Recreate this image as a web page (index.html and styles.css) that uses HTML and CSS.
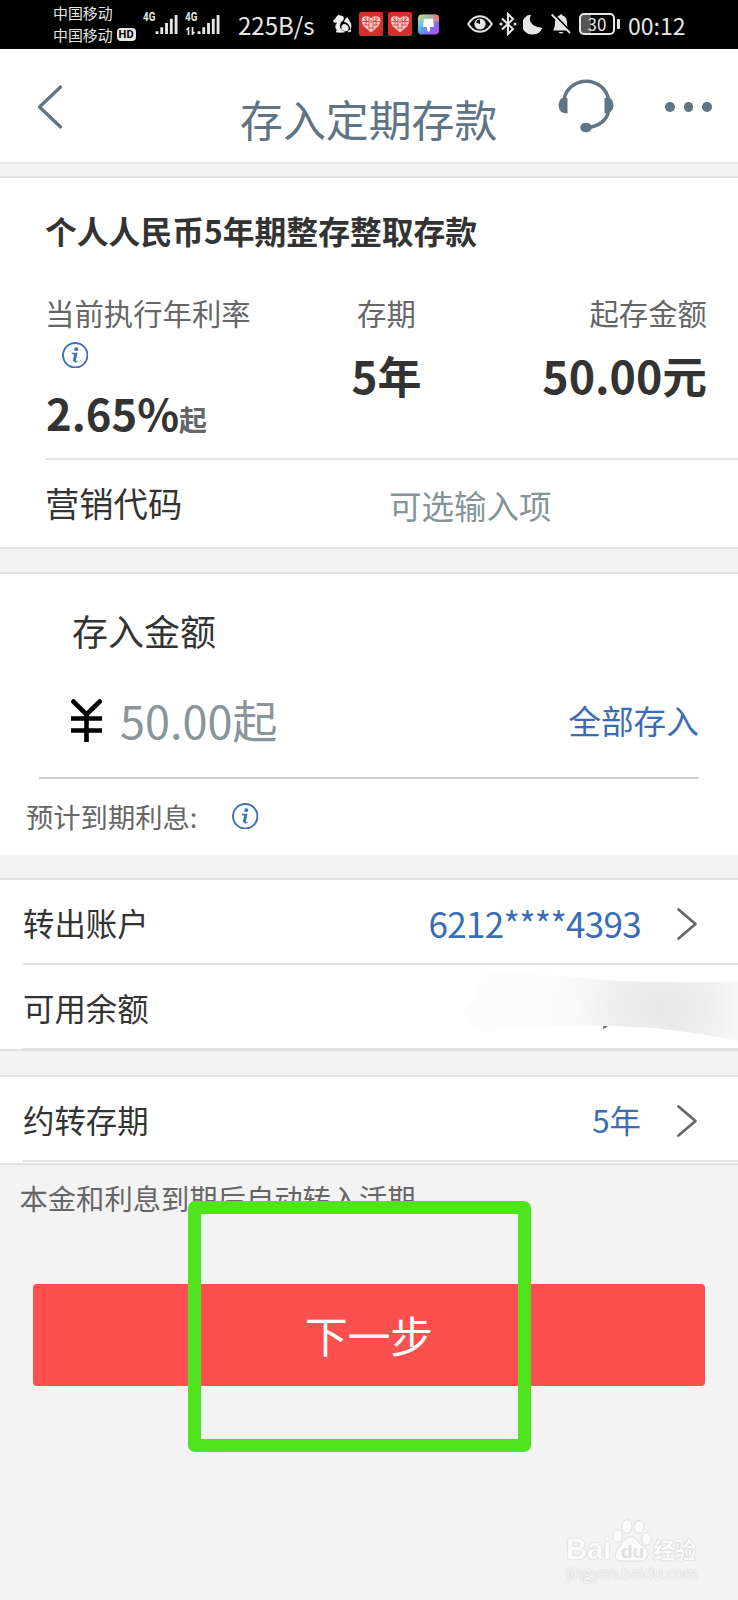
FILE: index.html
```html
<!DOCTYPE html>
<html lang="zh-CN">
<head>
<meta charset="utf-8">
<title>存入定期存款</title>
<link rel="stylesheet" href="styles.css">
</head>
<body>
<svg width="0" height="0" class="defs">
  <defs>
    <symbol id="info" viewBox="0 0 26 26">
      <circle cx="13" cy="13" r="12" fill="none" stroke="#3f72b5" stroke-width="1.9"/>
      <circle cx="14" cy="7" r="1.9" fill="#3f72b5"/>
      <path d="M9.600 11.300h4.600l-1.600 7.400q-.1 1.300 2.600.3" fill="none" stroke="#3f72b5" stroke-width="1.500"/>
      <path d="M13.400 11.300l-1.500 7.600" stroke="#3f72b5" stroke-width="2.600"/>
    </symbol>
    <symbol id="chevron" viewBox="0 0 22 34">
      <path d="M2.500 2.500L19.500 17L2.500 31.500" fill="none" stroke="#666" stroke-width="2.700" stroke-linecap="round" stroke-linejoin="round"/>
    </symbol>
    <symbol id="heart" viewBox="0 0 24 24">
      <rect width="24" height="24" rx="2" fill="#d5302c"/>
      <path d="M12 20.500L4.500 14Q1 8 4 5Q8 2.500 12 6Q16 2.500 20 5Q23 8 19.500 14Z" fill="#f6cdc8"/>
      <path d="M3 9.500h7M14 9.500h7M5 13h5M14 13h5M7 4v9M17 4v9M10 5.500v12M14 5.500v12M10 16h4M12 8v3M5 6l4 4M19 6l-4 4" stroke="#d5302c" stroke-width=".8"/>
    </symbol>
    <symbol id="bars" viewBox="0 0 24 22">
      <path d="M1.500 18v3M6.500 14v7M11.500 9.500v11.500M16.500 5v16M21.500 1v20" stroke="#e6e6e6" stroke-width="3"/>
    </symbol>
  </defs>
</svg>

<div class="screen">
  <div class="status">
    <div class="carriers">
      <span>中国移动</span>
      <span class="carrier-hd">中国移动<b class="hd">HD</b></span>
    </div>
    <div class="signal"><i>4G</i><svg class="bars"><use href="#bars"/></svg></div>
    <div class="signal second"><i>4G</i><svg class="bars"><use href="#bars"/></svg>
      <svg class="traffic" viewBox="0 0 9 8"><path d="M2.500 8V1L.5 3M6.500 0v7l2-2" fill="none" stroke="#e6e6e6" stroke-width="1.700"/></svg>
    </div>
    <span class="speed">225B/s</span>
    <svg class="squirrel" viewBox="0 0 20 20">
      <path d="M4.500 1.500L6 0L7.500 1Q11.500 1 11.500 4.500Q11 7 8.500 8Q7 11 7.500 14Q9 17.500 13 18.500Q10 19.500 5 19Q2 19 4 16.500Q.5 12.500 4.500 8.500Q0 9.500 0 6.500Q1 5 2.500 4.500Q2.500 2.500 4.500 1.500Z" fill="#eee"/>
      <path d="M11.500 8Q12.500 4 15 2.500Q17 5.500 19 9.500Q20 14 18 16Q18 9 11.500 8Z" fill="#eee"/>
      <path d="M9 16Q8 10 12.500 10Q16.500 11 16.500 15Q16 18.500 12.500 17.500Z" fill="#eee"/>
      <path d="M16 17l3-1.500v2.500l-3 1z" fill="#eee"/>
    </svg>
    <svg class="app"><use href="#heart"/></svg>
    <svg class="app app-two"><use href="#heart"/></svg>
    <svg class="paint" viewBox="0 0 22 21">
      <defs>
        <linearGradient id="rainbow" x1="0" y1="0" x2="1" y2="1">
          <stop offset="0" stop-color="#f3d65b"/><stop offset=".35" stop-color="#5ec2e3"/>
          <stop offset=".65" stop-color="#7d6cf0"/><stop offset="1" stop-color="#c34af0"/>
        </linearGradient>
        <linearGradient id="warm" x1="0" y1="0" x2="1" y2="0"><stop offset=".2" stop-color="#f7c555" stop-opacity="0"/><stop offset="1" stop-color="#f5766e"/></linearGradient>
      </defs>
      <rect width="22" height="21" rx="4" fill="url(#rainbow)"/>
      <path d="M0 9V4Q0 0 4 0H18Q22 0 22 4V7Z" fill="url(#warm)"/>
      <path d="M6 4.500h10v4H6zM5.500 8.500h11v4.500h-4v4q-1.500 2-3 0v-4h-4z" fill="#fff"/>
    </svg>
    <svg class="eye" viewBox="0 0 26 18">
      <path d="M1.200 9Q6 1.200 13 1.200T24.800 9Q20 16.800 13 16.800T1.200 9Z" fill="none" stroke="#e6e6e6" stroke-width="2"/>
      <circle cx="13" cy="9" r="5.600" fill="#e6e6e6"/><path d="M13 9V4.500q-3 0-4 3z" fill="#000"/>
    </svg>
    <svg class="bt" viewBox="0 0 18 24">
      <path d="M3 6.500L14 17L9 22V2L14 7L3 17.500" fill="none" stroke="#e6e6e6" stroke-width="2"/>
      <circle cx="2" cy="12" r="1.500" fill="#e6e6e6"/><circle cx="16" cy="12" r="1.500" fill="#e6e6e6"/>
    </svg>
    <svg class="moon" viewBox="0 0 20 21"><path d="M8 .500Q3 12 19.500 14Q16.500 20.500 10 20.500A10 10 0 0 1 8 .500Z" fill="#e6e6e6"/></svg>
    <svg class="bell" viewBox="0 0 20 22">
      <path d="M2 17.500Q4 15 4 9Q4.500 3.500 8.500 2.500Q10 0 11.500 2.500Q15.500 3.500 16 9Q16 15 18 17.500Z" fill="#e6e6e6"/>
      <path d="M7.500 19h5q-2.500 3-5 0z" fill="#e6e6e6"/>
      <path d="M2 0.500L20.500 19.500" stroke="#000" stroke-width="2"/><path d="M.7 1.500L19 20" stroke="#e6e6e6" stroke-width="1.800"/>
    </svg>
    <div class="battery"><span>30</span></div>
    <span class="clock">00:12</span>
  </div>

  <header class="nav">
    <svg class="back" viewBox="0 0 26 44"><path d="M23.500 2L2.500 22L23.500 42" fill="none" stroke="#5f7484" stroke-width="3.200" stroke-linecap="round" stroke-linejoin="round"/></svg>
    <h1>存入定期存款</h1>
    <svg class="headset" viewBox="0 0 56 56">
      <path d="M6 22.500A22.500 21.500 0 0 1 50.500 22.500M50.500 35Q47 48 30 50.500" fill="none" stroke="#5f7484" stroke-width="3.400"/>
      <path d="M9.500 21v15.500Q1 36.500 .500 28.500Q1 22 5 20.500ZM46.500 21v15.500Q55 36.500 55.500 28.500Q55 22 51 20.500Z" fill="#5f7484"/>
      <ellipse cx="28" cy="50.500" rx="5.800" ry="4.800" fill="#5f7484"/>
    </svg>
    <div class="more"><i></i><i></i><i></i></div>
  </header>

  <section class="card product">
    <h2>个人人民币5年期整存整取存款</h2>
    <div class="facts">
      <div class="fact">
        <span class="label">当前执行年利率</span>
        <svg class="info"><use href="#info"/></svg>
        <div class="value rate">2.65%<small>起</small></div>
      </div>
      <div class="fact center"><span class="label">存期</span><div class="value">5年</div></div>
      <div class="fact right"><span class="label">起存金额</span><div class="value money">50.00元</div></div>
    </div>
    <div class="code-row"><span class="code-label">营销代码</span><span class="code-input">可选输入项</span></div>
  </section>

  <section class="card deposit">
    <div class="deposit-title">存入金额</div>
    <div class="amount">
      <svg class="yen" viewBox="0 0 31 43"><path d="M.8 1L15.500 15.500L30.200 1M15.500 15V43M0 19.500H31M0 31.500H31" fill="none" stroke="#000" stroke-width="4.600"/></svg>
      <span class="amount-hint">50.00起</span>
      <span class="all">全部存入</span>
    </div>
    <div class="interest"><span>预计到期利息:</span><svg class="info"><use href="#info"/></svg></div>
  </section>

  <section class="card account">
    <div class="row"><span>转出账户</span><span class="link number">6212****4393</span><svg class="chevron"><use href="#chevron"/></svg></div>
    <div class="row balance"><span>可用余额</span>
      <svg class="smudge" viewBox="0 0 276 76">
        <defs>
          <radialGradient id="smoke" gradientUnits="userSpaceOnUse" cx="200" cy="42" r="125" gradientTransform="translate(0 8) scale(1 .8)">
            <stop offset="0" stop-color="#e8e8e8"/><stop offset=".3" stop-color="#ececec"/><stop offset=".7" stop-color="#f9f9f9"/><stop offset="1" stop-color="#fcfcfd"/>
          </radialGradient>
        </defs>
        <path d="M141 60h5l-3 2.500h-2z" fill="#777"/>
        <path d="M34 4Q20 3 17 20Q14 34 5 39Q-2 50 6 58Q12 67 26 66Q80 60 140 60Q205 60 276 75V15Q180 19 110 11Q55 5 34 4Z" fill="url(#smoke)"/>
      </svg>
    </div>
  </section>

  <section class="card term">
    <div class="row"><span>约转存期</span><span class="link">5年</span><svg class="chevron"><use href="#chevron"/></svg></div>
  </section>

  <p class="note">本金和利息到期后自动转入活期</p>
  <button class="next">下一步</button>
  <div class="marker"></div>

  <div class="watermark">
    <div class="brand"><span class="bai">Bai</span>
      <div class="paw">
        <svg viewBox="0 0 40 44"><g fill="#fbfbfb" stroke="#dedede" stroke-width="1"><ellipse cx="5.500" cy="17" rx="4.800" ry="6.500"/><ellipse cx="15" cy="7.500" rx="5" ry="6.800"/><ellipse cx="27" cy="8" rx="5" ry="6.500"/><ellipse cx="34.500" cy="20" rx="4.800" ry="6.300"/><path d="M19 18Q24 18 28 25Q37 30 36 36Q34 43 27 42H10Q3 42 3 36Q3 31 9 26Q13 18 19 18Z"/></g><text x="9" y="39" font-size="19" font-weight="700" font-family="Liberation Sans, sans-serif" fill="#e0e0e0">du</text></svg>
      </div>
      <span class="cn">经验</span></div>
    <div class="url">jingyan.baidu.com</div>
  </div>
</div>
</body>
</html>
```
FILE: styles.css
```css
* { box-sizing: border-box; }
body { margin: 0; background: #f3f3f3; font-family: "Noto Sans CJK SC", sans-serif; color: #333; }
svg { display: block; flex: none; }
.defs { position: absolute; }
.screen { position: relative; width: 738px; height: 1600px; overflow: hidden; background: #f3f3f3; }
h1, h2, p { margin: 0; font-weight: 400; }
i { font-style: normal; }

.status { display: flex; align-items: flex-start; height: 48.500px; padding-left: 53px; background: #000; color: #e6e6e6; white-space: nowrap; }
.carriers { width: 90px; padding-top: 2px; font-size: 14.900px; line-height: 21.500px; }
.carriers span { display: flex; align-items: center; }
.hd { width: 19px; height: 13px; margin-left: 4px; border-radius: 4px; background: #e6e6e6; color: #000; font: 700 11px/13px "Roboto", sans-serif; text-align: center; }
.signal { position: relative; width: 42px; height: 48px; padding: 14px 0 0 11.500px; }
.signal i { position: absolute; left: 0; top: 11px; font: 700 12px/13px "Roboto", sans-serif; transform: scaleX(.82); transform-origin: left; }
.bars { width: 24px; height: 21px; }
.traffic { position: absolute; left: 1px; top: 27px; width: 9px; height: 8px; }
.speed { width: 104px; padding-left: 11px; font-size: 24px; line-height: 50px; }
.squirrel { width: 19px; height: 20px; margin-top: 14px; margin-left: 2px; }
.app { width: 24px; height: 24px; margin: 12px 0 0 7px; }
.app-two { margin-left: 5px; }
.paint { width: 21px; height: 21px; margin: 14px 0 0 6px; }
.eye { width: 26px; height: 18px; margin: 15px 0 0 28px; }
.bt { width: 18px; height: 24px; margin: 12px 0 0 6px; }
.moon { width: 20px; height: 21px; margin: 14px 0 0 6px; }
.bell { width: 20px; height: 22px; margin: 13px 0 0 8px; }
.battery { position: relative; width: 36px; height: 22px; margin: 13px 0 0 8px; border: 2px solid #e6e6e6; border-radius: 5px; background: linear-gradient(90deg, #555 30%, #000 30%); font-size: 17px; line-height: 18px; text-align: center; }
.battery::after { content: ""; position: absolute; right: -7px; top: 4px; width: 3px; height: 10px; border-radius: 1px; background: #e6e6e6; }
.clock { margin-left: 13px; font-size: 23px; line-height: 50px; }

.nav { display: flex; align-items: flex-start; height: 115px; border-bottom: 2px solid #e6e6e6; background: #fff; color: #5f7484; }
.back { width: 26px; height: 44px; margin: 36.500px 0 0 37px; }
.nav h1 { width: 318px; margin: 39px 0 0 177px; font-size: 42.900px; line-height: 60px; white-space: nowrap; }
.headset { width: 56px; height: 56px; margin-top: 28px; }
.more { display: flex; gap: 9px; margin: 53.500px 0 0 51px; }
.more i { width: 9.500px; height: 9.500px; border-radius: 50%; background: #5f7484; }

.card { border: solid #e2e2e2; border-width: 2px 0; background: #fff; white-space: nowrap; }
.product { height: 372.500px; margin-top: 12.500px; padding: 32px 0 0 45px; }
.product h2 { font-size: 31.800px; line-height: 40px; font-weight: 700; }
.facts { display: grid; grid-template-columns: 290px 103px 1fr; height: 209.500px; padding: 43.500px 31px 0 0; border-bottom: 2px solid #e5e5e5; }
.label { display: block; color: #666; font-size: 29.400px; line-height: 36px; }
.value { margin-top: 20px; font-size: 44px; line-height: 50px; font-weight: 700; }
.rate { padding-left: 1px; font-size: 43.500px; }
.money { font-size: 44.700px; }
.center { text-align: center; }
.right { text-align: right; }
.info { width: 26.500px; height: 26.500px; }
.fact .info { margin: 12px 0 0 16.500px; }
.value small { color: #666; font-size: 28px; }
.code-row { display: flex; align-items: center; height: 87px; }
.code-label { width: 344px; padding-bottom: 2px; font-size: 34.300px; line-height: 40px; }
.code-input { padding-top: 4px; color: #869397; font-size: 32.500px; line-height: 40px; }

.deposit { height: 283px; margin-top: 23px; border-bottom: 0; padding-top: 34px; }
.deposit-title { padding-left: 72px; font-size: 36px; line-height: 44px; }
.amount { display: flex; align-items: center; height: 127px; margin: 0 39px; padding: 12px 0 0 32px; border-bottom: 2px solid #d2d2d2; }
.yen { width: 31px; height: 43px; margin-top: 1px; }
.amount-hint { margin-left: 18px; color: #8a9599; font-size: 45px; line-height: 50px; }
.all { margin-left: auto; color: #3a6db3; font-size: 32.700px; line-height: 40px; }
.interest { display: flex; align-items: center; height: 75px; padding-left: 26px; color: #666; font-size: 27.300px; }
.interest span { width: 206px; }

.account { height: 173px; margin-top: 23px; }
.row { display: flex; align-items: center; height: 85px; padding-left: 23px; font-size: 31.400px; background: linear-gradient(#e2e2e2, #e2e2e2) 23px 100% / 100% 2px no-repeat; }
.link { margin-left: auto; margin-right: 35px; color: #3a6db3; }
.number { font-size: 35px; letter-spacing: -.7px; }
.chevron { width: 22px; height: 34px; margin: 3px 40px 0 0; }
.smudge { width: 276px; height: 76px; margin: -7px 0 0 auto; }
.term { height: 90px; margin-top: 24px; }
.note { padding: 13px 0 0 19.500px; color: #666; font-size: 28.300px; line-height: 40px; }
.next { display: block; width: 672px; height: 102px; margin: 66.500px 0 0 33px; padding: 0 0 3px; border: 0; border-radius: 4px; background: #fc5050; color: #fff; font: 42.700px/96px "Noto Sans CJK SC", sans-serif; }
.marker { position: absolute; left: 188px; top: 1201px; width: 342.500px; height: 250.500px; border: 13.500px solid #50e41e; border-radius: 7px; }

.watermark { position: absolute; left: 566px; top: 1519px; width: 135px; color: #fbfbfb; text-shadow: 0 0 1px #bbb, 0 0 2px #ddd; }
.brand { display: flex; align-items: flex-end; height: 44px; font: 700 29px/26px "Liberation Sans", sans-serif; }
.bai { padding-bottom: 1px; }
.paw { width: 40px; height: 44px; margin-left: 1px; text-shadow: none; }
.brand .cn { margin: 0 0 2px 1px; font: 700 21.500px/24px "Noto Sans CJK SC", sans-serif; }
.url { font: 15.500px/20px "Open Sans", sans-serif; }
```
